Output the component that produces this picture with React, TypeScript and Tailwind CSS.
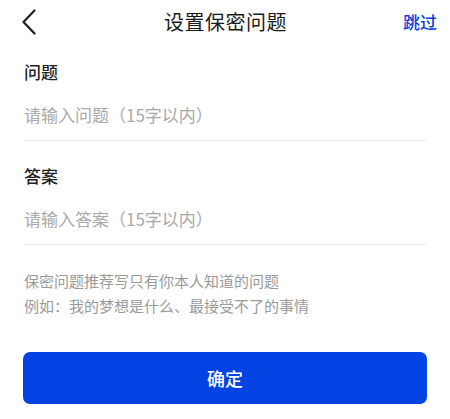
export default function App() {
  return (
    <div className="w-[450px] h-[419px] bg-white font-['Noto_Sans_CJK_SC','Noto_Sans',sans-serif] text-[#1a1a1a]">
      {/* top bar */}
      <header className="grid grid-cols-[1fr_auto_1fr] items-center h-[44px] pl-[14px] pr-[13px]">
        <button className="justify-self-start w-[30px] h-[30px] flex items-center justify-center">
          <svg width="16" height="26" viewBox="0 0 16 26" fill="none">
            <polyline
              points="13.5,1.5 2.5,13 13.5,24.5"
              stroke="#1f1f1f"
              strokeWidth="2.2"
              strokeLinecap="round"
              strokeLinejoin="round"
            />
          </svg>
        </button>
        <h1 className="text-[20px] leading-[28px] font-normal tracking-[0.5px]">设置保密问题</h1>
        <button className="justify-self-end text-[17px] font-medium text-[#0b3fdc] leading-6">跳过</button>
      </header>

      {/* form */}
      <div className="pl-6 pr-[23px]">
        <div className="pt-[16px] border-b border-[#ebebeb]">
          <div className="text-[17px] leading-6 font-medium text-[#222]">问题</div>
          <input
            className="mt-[6px] block w-full h-[50px] text-[17px] outline-none placeholder:text-[#a9a9a9] pb-[1px]"
            placeholder="请输入问题（15字以内）"
          />
        </div>
        <div className="pt-[23px] border-b border-[#ebebeb]">
          <div className="text-[17px] leading-6 font-medium text-[#222]">答案</div>
          <input
            className="mt-[6px] block w-full h-[50px] text-[17px] outline-none placeholder:text-[#a9a9a9] pb-[1px]"
            placeholder="请输入答案（15字以内）"
          />
        </div>

        <div className="mt-[23px] text-[15px] leading-[25px] text-[#9a9a9a]">
          <p>保密问题推荐写只有你本人知道的问题</p>
          <p>例如：我的梦想是什么、最接受不了的事情</p>
        </div>
      </div>

      <div className="px-[23px] mt-[34px]">
        <button className="w-full h-[52px] rounded-[7px] bg-[#0343e3] text-white text-[18px] font-medium">
          确定
        </button>
      </div>
    </div>
  );
}
